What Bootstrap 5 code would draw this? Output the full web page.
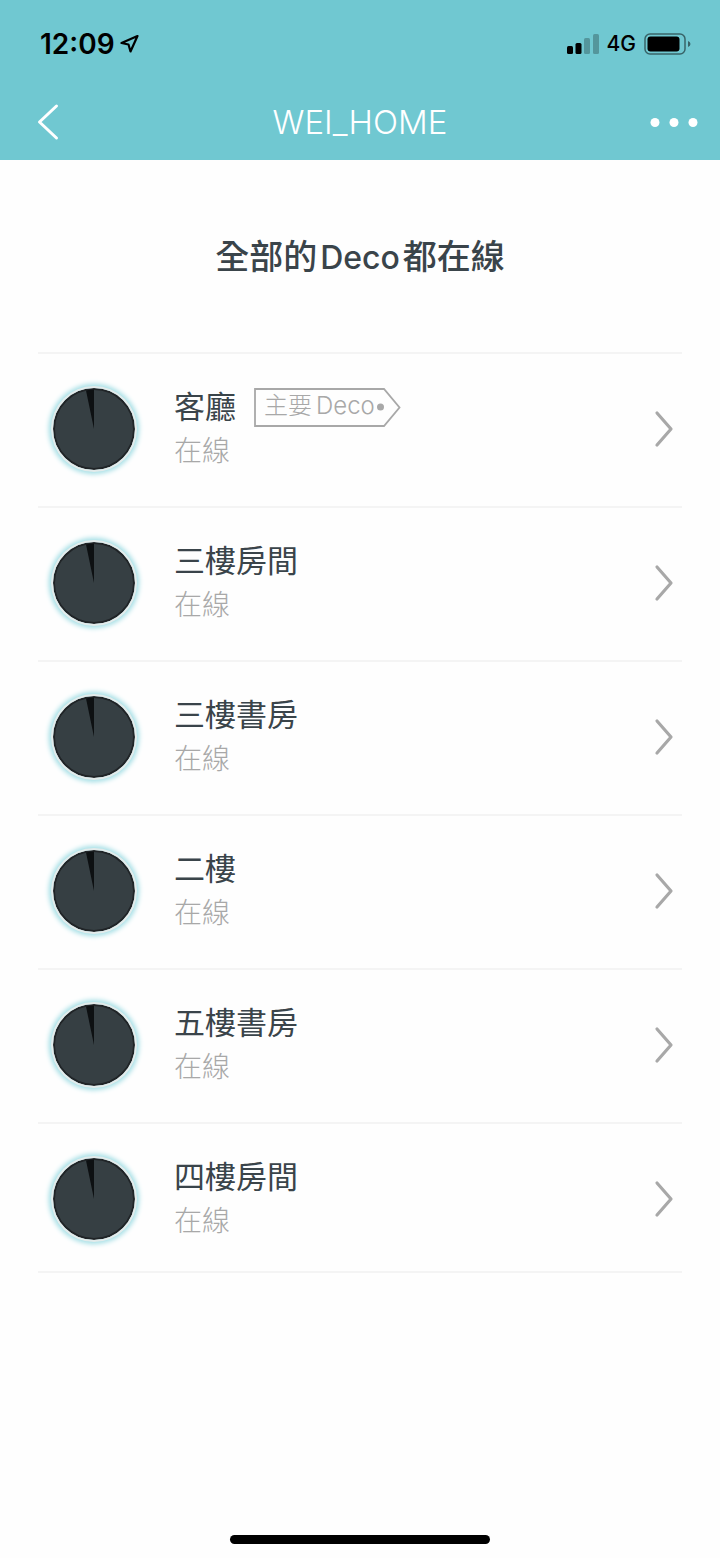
<!DOCTYPE html>
<html lang="zh-Hant">
<head>
<meta charset="utf-8">
<meta name="viewport" content="width=device-width, initial-scale=1">
<title>WEI_HOME</title>
<link href="https://cdn.jsdelivr.net/npm/bootstrap@5.3.0/dist/css/bootstrap.min.css" rel="stylesheet">
<style>
  body { font-family: Inter, "Noto Sans CJK TC", sans-serif; color: #3a444a; background: #fefefe; }
  .top-area { background: #70c8d1; }
  .status-strip { height: 84px; padding: 3px 28px 0 40px; color: #000; }
  .clock { font-size: 28px; line-height: 36px; font-weight: 600; }
  .network { font-size: 21px; line-height: 36px; font-weight: 500; }
  .title-bar { height: 76px; padding: 0 20px 0 20px; color: #fff; }
  .title-bar h1 { font-size: 33px; line-height: 44px; font-weight: 300; }
  .side { flex: 1 1 0; }
  .bare { padding: 0; border: 0; background: none; color: inherit; }
  .page-body { padding: 0 38px; }
  .summary { padding: 72px 0 70px; font-size: 34px; line-height: 49px; font-weight: 500; }
  .summary-brand { font-size: 32px; margin: 0 3px; }
  .device { padding: 31px 8px 33px 15px; border-top: 2px solid #f4f4f4; color: inherit; gap: 39px; }
  .device-list li:last-child .device { padding-bottom: 28px; border-bottom: 2px solid #f4f4f4; }
  .unit { width: 82px; height: 82px; border-radius: 50%; box-shadow: 0 0 0 2px #e3ebeb, 0 0 5px 4px #9fdde4; }
  .device-name { font-size: 31px; line-height: 44px; }
  .device-state { font-size: 28px; line-height: 44px; font-weight: 300; color: #a8a8a8; }
  .tag { width: 147px; height: 39px; padding-left: 10px; margin-left: 18px; font-size: 24px; line-height: 35px; font-weight: 300; color: #a8a8a8; }
  .tag-brand { margin-left: 4px; }
  .home-bar { width: 36%; height: 9px; margin-bottom: 14px; border-radius: 5px; background: #000; }
</style>
</head>
<body class="d-flex flex-column min-vh-100">
<header class="top-area">
  <div class="status-strip d-flex align-items-center justify-content-between">
    <div class="d-flex align-items-center gap-1">
      <span class="clock">12:09</span>
      <svg width="22" height="22" viewBox="0 0 22 22" fill="none" stroke="#000" stroke-width="2.200" stroke-linejoin="round" aria-hidden="true"><path d="M18.500 3 2.500 10 9.500 11.500 11.500 18.500Z"/></svg>
    </div>
    <div class="d-flex align-items-center gap-2">
      <svg width="33" height="22" viewBox="0 0 33 22" aria-hidden="true"><rect x="1" y="13" width="6" height="8" rx="1.500"/><rect x="9.500" y="10" width="6" height="11" rx="1.500"/><rect x="18" y="5" width="6" height="16" rx="1.500" opacity=".25"/><rect x="27" y="1" width="6" height="20" rx="1.500" opacity=".25"/></svg>
      <span class="network">4G</span>
      <svg width="48" height="22" viewBox="0 0 48 22" aria-hidden="true"><rect x="1" y="1" width="40" height="20" rx="5" fill="none" stroke="#000" stroke-width="1.500" opacity=".5"/><rect x="3.500" y="3.500" width="32" height="15" rx="3"/><path d="M44 8q2.500.8 2.500 3T44 14Z" opacity=".5"/></svg>
    </div>
  </div>
  <nav class="title-bar d-flex align-items-center" aria-label="WEI_HOME">
    <div class="side"><button class="bare d-flex" type="button" aria-label="返回"><svg width="44" height="40" viewBox="0 0 44 40" fill="none" stroke="#fff" stroke-width="3" stroke-linecap="round" stroke-linejoin="round"><path d="M36.500 4 19.500 20 36.500 36"/></svg></button></div>
    <h1 class="m-0">WEI_HOME</h1>
    <div class="side d-flex justify-content-end"><button class="bare d-flex" type="button" aria-label="更多"><svg width="52" height="40" viewBox="0 0 52 40" fill="#fff"><circle cx="7" cy="20.500" r="4.500"/><circle cx="26" cy="20.500" r="4.500"/><circle cx="45" cy="20.500" r="4.500"/></svg></button></div>
  </nav>
</header>
<main class="page-body flex-grow-1">
  <h2 class="summary m-0 text-center">全部的<span class="summary-brand">Deco</span>都在線</h2>
  <ul class="device-list list-unstyled m-0" id="devices"></ul>
</main>
<footer class="d-flex justify-content-center"><div class="home-bar"></div></footer>

<script>
  const devices = [
    { name: '客廳', main: true }, { name: '三樓房間' }, { name: '三樓書房' },
    { name: '二樓' }, { name: '五樓書房' }, { name: '四樓房間' }
  ];
  const tag = `<span class="tag position-relative"><svg class="position-absolute top-0 start-0" width="147" height="39" viewBox="0 0 147 39" fill="none" stroke="#a8a8a8" stroke-width="1.800" aria-hidden="true"><path d="M1 1H130L145.500 19.500 130 38H1Z"/><circle cx="126.500" cy="19" r="3.500" fill="#a8a8a8" stroke="none"/></svg>主要<span class="tag-brand">Deco</span></span>`;
  document.getElementById('devices').innerHTML = devices.map(d => `
    <li><a href="#" class="device d-flex align-items-center text-decoration-none">
      <svg class="unit flex-shrink-0" viewBox="0 0 82 82" aria-hidden="true"><circle cx="41" cy="41" r="40" fill="#363f43" stroke="#202427" stroke-width="2"/><path d="M41 41 33 2.500Q37 1.500 41 1.500Z" fill="#0d1012"/></svg>
      <span class="flex-grow-1">
        <span class="device-name d-flex align-items-center">${d.name}${d.main ? tag : ''}</span>
        <span class="device-state d-block">在線</span>
      </span>
      <svg width="20" height="38" viewBox="0 0 20 38" fill="none" stroke="#a8a8a8" stroke-width="3.200" stroke-linecap="round" stroke-linejoin="round" aria-hidden="true"><path d="M3 3 17 19 3 35"/></svg>
    </a></li>`).join('');
</script>
<script src="https://cdn.jsdelivr.net/npm/bootstrap@5.3.0/dist/js/bootstrap.bundle.min.js"></script>
</body>
</html>
